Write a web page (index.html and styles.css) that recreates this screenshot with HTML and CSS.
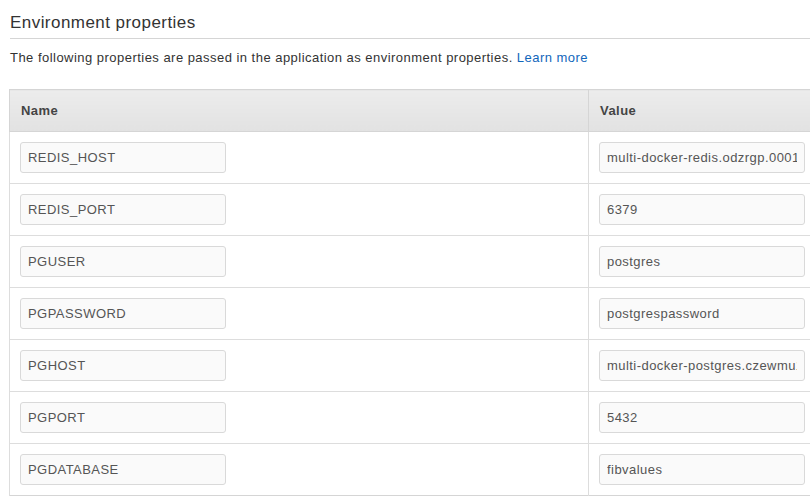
FILE: index.html
```html
<!DOCTYPE html>
<html>
<head>
<meta charset="utf-8">
<link rel="stylesheet" href="styles.css">
</head>
<body>
<div class="page">
  <h2 class="title">Environment properties</h2>
  <p class="desc">The following properties are passed in the application as environment properties. <a class="link" href="#">Learn more</a></p>
  <div class="table-wrap">
  <table class="props">
    <thead>
      <tr><th class="col-name">Name</th><th class="col-value">Value</th></tr>
    </thead>
    <tbody>
      <tr><td><input class="field" value="REDIS_HOST"></td><td><input class="field" value="multi-docker-redis.odzrgp.0001.use1.cache.amazonaws.com"></td></tr>
      <tr><td><input class="field" value="REDIS_PORT"></td><td><input class="field" value="6379"></td></tr>
      <tr><td><input class="field" value="PGUSER"></td><td><input class="field" value="postgres"></td></tr>
      <tr><td><input class="field" value="PGPASSWORD"></td><td><input class="field" value="postgrespassword"></td></tr>
      <tr><td><input class="field" value="PGHOST"></td><td><input class="field" value="multi-docker-postgres.czewmu1bx5q9.us-east-1.rds.amazonaws.com"></td></tr>
      <tr><td><input class="field" value="PGPORT"></td><td><input class="field" value="5432"></td></tr>
      <tr><td><input class="field" value="PGDATABASE"></td><td><input class="field" value="fibvalues"></td></tr>
    </tbody>
  </table>
  </div>
</div>
</body>
</html>
```
FILE: styles.css
```css
html, body {
  margin: 0;
  padding: 0;
  background: #ffffff;
  overflow: hidden;
}
body {
  font-family: "Liberation Sans", Arial, sans-serif;
  color: #333;
}
.page {
  padding-left: 9px;
  overflow: hidden;
}
.title {
  margin: 0 0 0 1px;
  padding-top: 13px;
  height: 25px;
  font-size: 17px;
  font-weight: normal;
  letter-spacing: 0.45px;
  line-height: 20px;
  color: #333;
  border-bottom: 1px solid #d5d5d5;
}
.desc {
  margin: 0 0 0 1px;
  padding-top: 11px;
  height: 39px;
  font-size: 13px;
  letter-spacing: 0.47px;
  line-height: 16px;
  color: #333;
}
.link {
  color: #1166bb;
  text-decoration: none;
}
.table-wrap {
  overflow: hidden;
}
.props {
  border-collapse: collapse;
  border: 1px solid #d5d5d5;
  font-size: 13px;
  letter-spacing: 0.45px;
}
.props th {
  height: 41px;
  padding: 0 11px;
  text-align: left;
  font-weight: bold;
  color: #444;
  background: linear-gradient(#ececec, #e2e2e2);
  border: 1px solid #d5d5d5;
}
.col-name {
  width: 556px;
  min-width: 556px;
}
.col-value {
  width: 400px;
  min-width: 400px;
}
.props td {
  padding: 10px;
  height: 31px;
  border-top: 1px solid #dddddd;
  border-left: 1px solid #dddddd;
  border-right: 1px solid #dddddd;
  vertical-align: middle;
}
.field {
  display: block;
  box-sizing: border-box;
  width: 206px;
  height: 31px;
  margin: 0;
  padding: 0 7px;
  font-family: "Liberation Sans", Arial, sans-serif;
  font-size: 13px;
  letter-spacing: 0.45px;
  color: #555;
  background: #fafafa;
  border: 1px solid #d9d9d9;
  border-radius: 3px;
  outline: none;
}
```
